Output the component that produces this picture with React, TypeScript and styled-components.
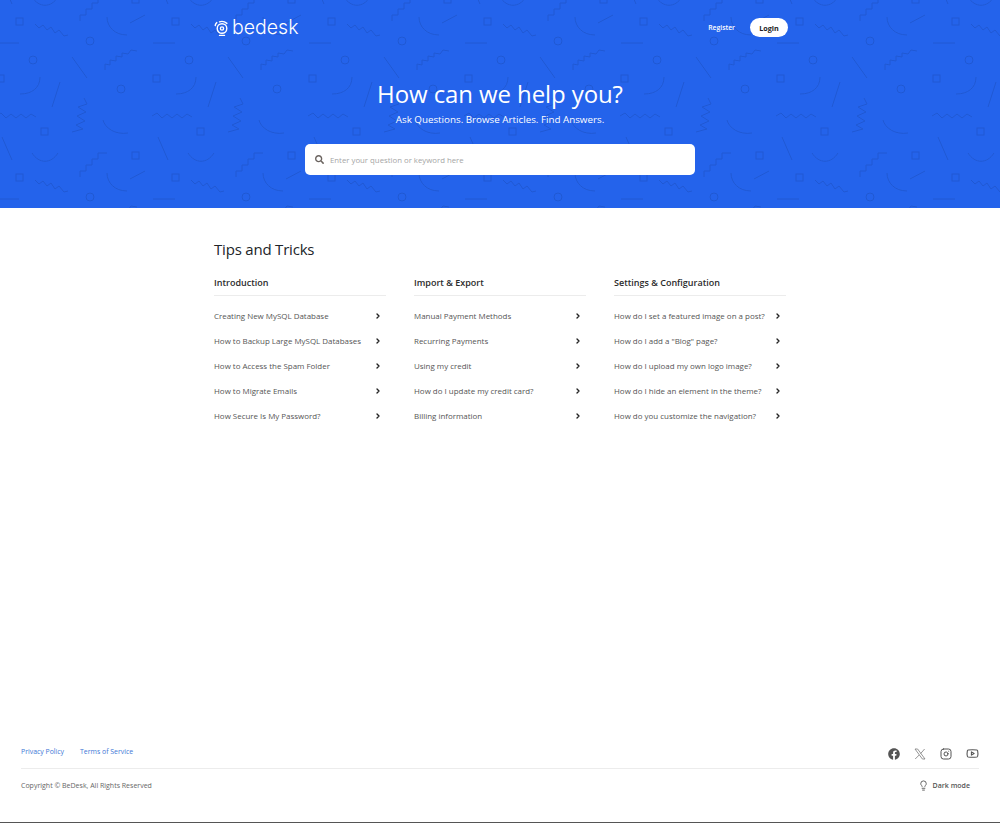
import React from "react"
import styled, { createGlobalStyle } from "styled-components"
import { ChevronRight, Instagram, Lightbulb, Youtube } from "lucide-react"
import { FaFacebook, FaSearch } from "react-icons/fa"

const GlobalStyle = createGlobalStyle`
  * {
    box-sizing: border-box;
  }
  body {
    margin: 0;
    background: #fff;
    font-family: "Open Sans", "Noto Sans", sans-serif;
    color: #212529;
  }
`

const Page = styled.div`
  display: flex;
  flex-direction: column;
  min-height: 823px;
  border-bottom: 1px solid #555;
`

const Hero = styled.header`
  position: relative;
  height: 208px;
  background: #2463eb;
  overflow: hidden;
`

const Pattern = styled.svg`
  position: absolute;
  inset: 0;
  width: 100%;
  height: 100%;
`

const HeroInner = styled.div`
  position: relative;
  display: flex;
  flex-direction: column;
  align-items: center;
  width: 572px;
  margin: 0 auto;
`

const NavBar = styled.nav`
  display: flex;
  align-items: center;
  justify-content: space-between;
  width: 100%;
  height: 55px;
`

const Logo = styled.a`
  display: flex;
  align-items: center;
  gap: 2px;
  color: #fff;
  font-family: Inter, sans-serif;
  font-weight: 300;
  font-size: 19.5px;
  line-height: 1;
`

const NavLinks = styled.div`
  display: flex;
  align-items: center;
  gap: 15px;
  margin-right: -2px;
`

const NavLink = styled.a`
  color: #fff;
  font-size: 6.8px;
  font-weight: 600;
`

const LoginButton = styled.a`
  display: flex;
  align-items: center;
  justify-content: center;
  width: 38px;
  height: 19px;
  border-radius: 10px;
  background: #fff;
  color: #222;
  font-size: 7.2px;
  font-weight: 700;
`

const Title = styled.h1`
  margin: 21px 0 0;
  color: #fff;
  font-size: 24px;
  font-weight: 400;
  letter-spacing: -0.1px;
  line-height: 36px;
`

const Subtitle = styled.p`
  margin: 0;
  color: #fff;
  font-size: 9.8px;
  line-height: 16px;
`

const SearchBox = styled.div`
  display: flex;
  align-items: center;
  gap: 6px;
  width: 390px;
  height: 31px;
  margin-top: 16px;
  padding: 0 10px;
  border-radius: 5px;
  background: #fff;
  color: #6b6460;
`

const SearchInput = styled.input`
  flex: 1;
  border: none;
  outline: none;
  padding: 0;
  background: none;
  font-family: inherit;
  font-size: 7.8px;
  &::placeholder {
    color: #a5a5a5;
    opacity: 1;
  }
`

const Main = styled.main`
  width: 572px;
  margin: 0 auto;
  padding-top: 30px;
`

const SectionTitle = styled.h2`
  margin: 0;
  color: #212529;
  font-size: 15px;
  font-weight: 400;
  letter-spacing: -0.2px;
  line-height: 22px;
`

const Columns = styled.div`
  display: grid;
  grid-template-columns: repeat(3, 172px);
  gap: 28px;
  margin-top: 15px;
`

const ColumnTitle = styled.h3`
  margin: 0;
  padding-bottom: 5px;
  border-bottom: 1px solid #ececec;
  color: #2b2b2b;
  font-size: 9px;
  font-weight: 600;
  line-height: 15px;
`

const ArticleList = styled.ul`
  margin: 7px 0 0;
  padding: 0;
  list-style: none;
`

const Article = styled.li`
  display: flex;
  align-items: center;
  justify-content: space-between;
  height: 25px;
  padding-right: 4px;
  color: #555;
  font-size: 7.95px;
  svg {
    color: #222;
  }
`

const Footer = styled.footer`
  margin-top: auto;
  padding: 0 21px;
`

const FooterTop = styled.div`
  display: flex;
  align-items: center;
  justify-content: space-between;
  height: 36px;
  border-bottom: 1px solid #ececec;
`

const FooterLinks = styled.div`
  display: flex;
  gap: 16px;
  margin-top: 2px;
`

const FooterLink = styled.a`
  color: #3d77d6;
  font-size: 6.9px;
`

const SocialIcons = styled.div`
  display: flex;
  align-items: center;
  gap: 14px;
  margin-top: 6px;
  color: #555;
`

const XIcon = styled.svg`
  color: #7a7a7a;
`

const FooterBottom = styled.div`
  display: flex;
  align-items: center;
  justify-content: space-between;
  height: 33px;
  margin-bottom: 20px;
  color: #666;
  font-size: 7px;
`

const DarkMode = styled.a`
  display: flex;
  align-items: center;
  gap: 4px;
  margin-right: 9px;
  color: #555;
  font-weight: 600;
`

const columns = [
  {
    title: "Introduction",
    items: [
      "Creating New MySQL Database",
      "How to Backup Large MySQL Databases",
      "How to Access the Spam Folder",
      "How to Migrate Emails",
      "How Secure Is My Password?",
    ],
  },
  {
    title: "Import & Export",
    items: [
      "Manual Payment Methods",
      "Recurring Payments",
      "Using my credit",
      "How do I update my credit card?",
      "Billing information",
    ],
  },
  {
    title: "Settings & Configuration",
    items: [
      "How do I set a featured image on a post?",
      'How do I add a "Blog" page?',
      "How do I upload my own logo image?",
      "How do I hide an element in the theme?",
      "How do you customize the navigation?",
    ],
  },
]

function HeroPattern() {
  return (
    <Pattern aria-hidden="true">
      <defs>
        <pattern id="doodles" width="156" height="156" patternUnits="userSpaceOnUse">
          <g fill="none" stroke="#1f58d3" strokeWidth="1">
            <rect x="16" y="18" width="7" height="7" />
            <rect x="-3" y="75" width="7" height="7" />
            <rect x="153" y="75" width="7" height="7" />
            <rect x="41" y="128" width="7" height="7" />
            <rect x="132" y="-4" width="7" height="7" />
            <rect x="132" y="152" width="7" height="7" />
            <circle cx="33" cy="60" r="4" />
            <circle cx="90" cy="41" r="4" />
            <circle cx="121" cy="89" r="4" />
            <path d="M80 21v-6h6v-6h6V3h6V-3h9" />
            <path d="M80 177v-6h6v-6h6v-6h6v-6h9" />
            <path d="M107 17c0 10 8 18 20 18" />
            <path d="M130 23l15-8" />
            <path d="M35 24l4 4 4-3 4 5 4-3 4 6 4-3 5 6 4-1" />
            <path d="M-3 43h22M153 43h22" />
            <path d="M105 70v-6l5 1v-5l6 1v-5l6 1v-4l6 1 3-4 6 1" />
            <path d="M72 57l15 21" />
            <path d="M20 94c12 0 20-6 20-17" />
            <path d="M52 107l8-25" />
            <path d="M84 98l3 6-9 3 8 5-9 4 8 5-9 4 7 4-11 3" />
            <path d="M-4 116l5-3 5 5 5-4 5 4 5-4 5 4 5-4 5 3" />
            <path d="M152 116l5-3 5 5 5-4 5 4 5-4 5 4" />
            <path d="M103 120c2 8 12 15 25 13" />
            <path d="M2 137l10 23M158 137l10 23M2-19l10 23" />
            <path d="M32 153c7 11 19 11 26 0M32-3c7 11 19 11 26 0" />
          </g>
        </pattern>
      </defs>
      <rect width="100%" height="100%" fill="url(#doodles)" />
    </Pattern>
  )
}

function LogoMark() {
  return (
    <svg width="16" height="18" viewBox="0 0 16 18" fill="none" stroke="#fff" strokeWidth="1.4" strokeLinecap="round">
      <circle cx="8" cy="9.5" r="4.8" />
      <circle cx="8" cy="9.5" r="1.6" />
      <path d="M1.2 6.5C1.4 5.4 2 4.3 2.8 3.6" />
      <path d="M5.5 2.8c2.6-.8 5.2-.3 7.4 1.6" />
      <path d="M5.5 16.4h5" />
    </svg>
  )
}

function XMark() {
  return (
    <XIcon width="12" height="12" viewBox="0 0 12 12" fill="none" stroke="currentColor" strokeWidth="0.8">
      <path d="M1 1h2.6l7.4 10H8.4z" />
      <path d="M10.6 1 6.6 5.6M5.2 7 1.2 11" />
    </XIcon>
  )
}

export default function App() {
  return (
    <Page>
      <GlobalStyle />
      <Hero>
        <HeroPattern />
        <HeroInner>
          <NavBar>
            <Logo>
              <LogoMark />
              bedesk
            </Logo>
            <NavLinks>
              <NavLink>Register</NavLink>
              <LoginButton>Login</LoginButton>
            </NavLinks>
          </NavBar>
          <Title>How can we help you?</Title>
          <Subtitle>Ask Questions. Browse Articles. Find Answers.</Subtitle>
          <SearchBox>
            <FaSearch size={9} />
            <SearchInput placeholder="Enter your question or keyword here" />
          </SearchBox>
        </HeroInner>
      </Hero>
      <Main>
        <SectionTitle>Tips and Tricks</SectionTitle>
        <Columns>
          {columns.map((column) => (
            <section key={column.title}>
              <ColumnTitle>{column.title}</ColumnTitle>
              <ArticleList>
                {column.items.map((item) => (
                  <Article key={item}>
                    {item}
                    <ChevronRight size={8} strokeWidth={4} />
                  </Article>
                ))}
              </ArticleList>
            </section>
          ))}
        </Columns>
      </Main>
      <Footer>
        <FooterTop>
          <FooterLinks>
            <FooterLink>Privacy Policy</FooterLink>
            <FooterLink>Terms of Service</FooterLink>
          </FooterLinks>
          <SocialIcons>
            <FaFacebook size={12} />
            <XMark />
            <Instagram size={12} />
            <Youtube size={13} />
          </SocialIcons>
        </FooterTop>
        <FooterBottom>
          Copyright © BeDesk, All Rights Reserved
          <DarkMode>
            <Lightbulb size={11} />
            Dark mode
          </DarkMode>
        </FooterBottom>
      </Footer>
    </Page>
  )
}
